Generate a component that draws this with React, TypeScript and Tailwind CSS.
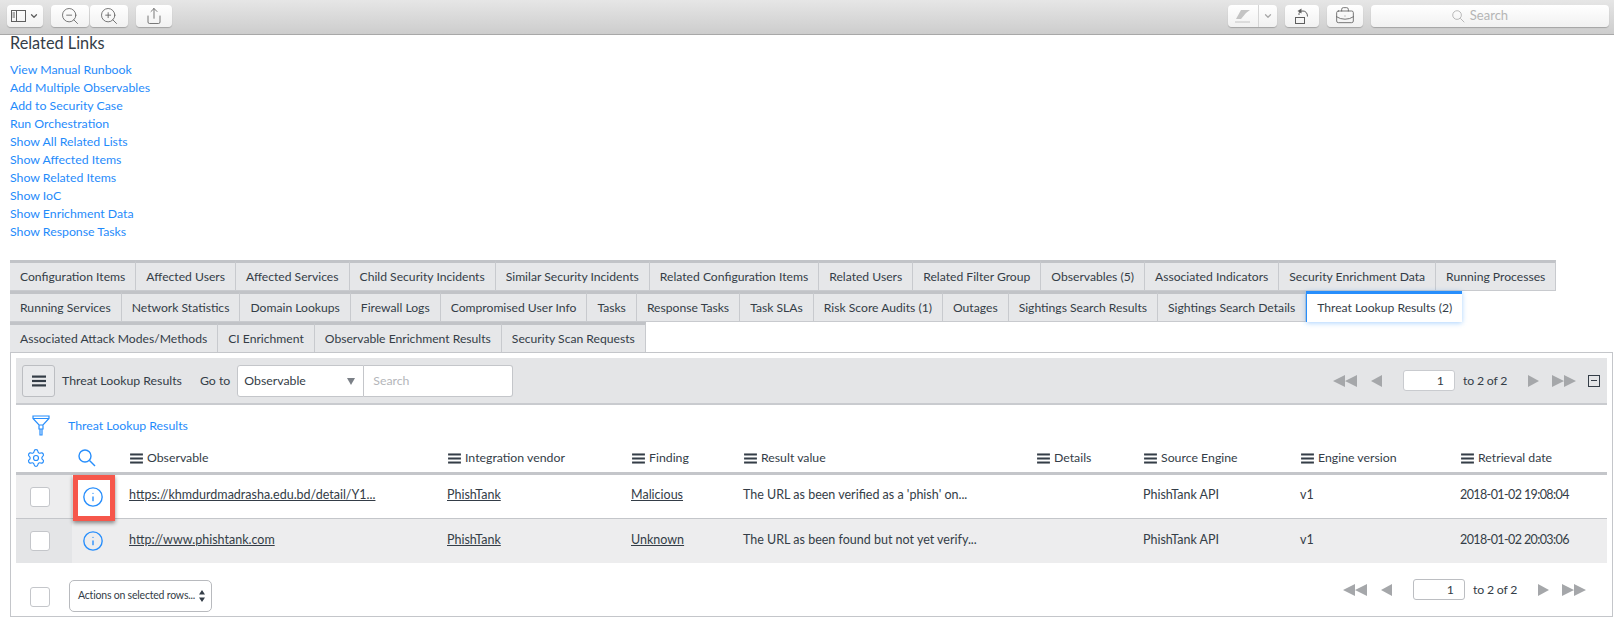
import { Info, Settings, Share, ZoomIn, ZoomOut, ChevronDown, BriefcaseBusiness } from 'lucide-react';

const links = [
  'View Manual Runbook',
  'Add Multiple Observables',
  'Add to Security Case',
  'Run Orchestration',
  'Show All Related Lists',
  'Show Affected Items',
  'Show Related Items',
  'Show IoC',
  'Show Enrichment Data',
  'Show Response Tasks',
];

const tabRows = [
  ['Configuration Items', 'Affected Users', 'Affected Services', 'Child Security Incidents', 'Similar Security Incidents', 'Related Configuration Items', 'Related Users', 'Related Filter Group', 'Observables (5)', 'Associated Indicators', 'Security Enrichment Data', 'Running Processes'],
  ['Running Services', 'Network Statistics', 'Domain Lookups', 'Firewall Logs', 'Compromised User Info', 'Tasks', 'Response Tasks', 'Task SLAs', 'Risk Score Audits (1)', 'Outages', 'Sightings Search Results', 'Sightings Search Details', 'Threat Lookup Results (2)'],
  ['Associated Attack Modes/Methods', 'CI Enrichment', 'Observable Enrichment Results', 'Security Scan Requests'],
];

const columns = ['Observable', 'Integration vendor', 'Finding', 'Result value', 'Details', 'Source Engine', 'Engine version', 'Retrieval date'];

const rows = [
  ['https://khmdurdmadrasha.edu.bd/detail/Y1...', 'PhishTank', 'Malicious', "The URL as been verified as a 'phish' on...", '', 'PhishTank API', 'v1', '2018-01-02 19:08:04'],
  ['http://www.phishtank.com', 'PhishTank', 'Unknown', 'The URL as been found but not yet verify...', '', 'PhishTank API', 'v1', '2018-01-02 20:03:06'],
];

const gridCols = 'grid grid-cols-[56px_46px_318px_184px_112px_293px_107px_157px_160px_157px]';

function Btn({ className, children }: { className: string; children?: React.ReactNode }) {
  return (
    <div className={`h-[22px] flex items-center justify-center rounded-[4px] bg-gradient-to-b from-white to-[#f1f1f1] shadow-[0_1px_1px_rgba(0,0,0,0.22)] text-[#5e5e5e] ${className}`}>
      {children}
    </div>
  );
}

function Bars({ className }: { className: string }) {
  return (
    <svg viewBox="0 0 14 12" className={className} fill="currentColor">
      <rect x="0" y="0.5" width="14" height="2.2" />
      <rect x="0" y="4.9" width="14" height="2.2" />
      <rect x="0" y="9.3" width="14" height="2.2" />
    </svg>
  );
}

function Magnifier({ className, strokeWidth }: { className: string; strokeWidth: number }) {
  return (
    <svg viewBox="0 0 18 18" className={className} fill="none" stroke="currentColor" strokeWidth={strokeWidth}>
      <circle cx="7" cy="7" r="6" />
      <path d="M11.5 11.500 17 17" />
    </svg>
  );
}

function Pager({ boxed }: { boxed?: boolean }) {
  const tri = 'fill-[#a5a7aa]';
  return (
    <div className="flex items-center text-[#343d47]">
      <svg viewBox="0 0 24 12" className="w-6 h-3 mr-[14px]">
        <path d="M0 6 12 0v12zM12 6 24 0v12z" className={tri} />
      </svg>
      <svg viewBox="0 0 11 12" className="w-[11px] h-3 mr-[21px]">
        <path d="M0 6 11 0v12z" className={tri} />
      </svg>
      <div className={`h-[21px] w-[52px] flex items-center justify-end pr-[10px] pt-px rounded-[3px] bg-white border ${boxed ? 'border-[#c9cbcf]' : 'border-[#bcbec2]'}`}>1</div>
      <span className="ml-[8px] w-[45px] pt-px whitespace-nowrap tracking-[-0.2px]">to 2 of 2</span>
      <svg viewBox="0 0 11 12" className="w-[11px] h-3 ml-[20px]">
        <path d="M11 6 0 0v12z" className={tri} />
      </svg>
      <svg viewBox="0 0 24 12" className="w-6 h-3 ml-[13px]">
        <path d="M12 6 0 0v12zM24 6 12 0v12z" className={tri} />
      </svg>
    </div>
  );
}

export default function App() {
  return (
    <div className="h-[617px] w-[1614px] overflow-hidden bg-white text-[#343d47] font-['Lato',sans-serif] text-[12.3px] flex flex-col">
      {/* toolbar */}
      <div className="h-[35px] shrink-0 flex items-start pt-[5px] pl-[7px] pr-[5px] bg-gradient-to-b from-[#e6e6e6] to-[#cdcdcd] border-b border-[#a8a8a8]">
        <Btn className="w-[36px] gap-[3px]">
          <svg viewBox="0 0 15 12" className="w-[15px] h-3" fill="none" stroke="currentColor">
            <rect x="0.5" y="0.5" width="14" height="11" />
            <path d="M5.5 0.5v11M1.5 3h2.5M1.5 5h2.5M1.5 7h2.5" />
          </svg>
          <ChevronDown className="w-[10px] h-[10px]" strokeWidth={3} />
        </Btn>
        <Btn className="w-[38px] ml-[8px]"><ZoomOut className="w-[20px] h-[20px]" strokeWidth={1} /></Btn>
        <Btn className="w-[38px] ml-px"><ZoomIn className="w-[20px] h-[20px]" strokeWidth={1} /></Btn>
        <Btn className="w-[36px] ml-[8px]"><Share className="w-[18px] h-[18px]" strokeWidth={1.1} /></Btn>
        <div className="flex-1" />
        <Btn className="w-[49px]">
          <div className="w-[31px] h-full flex items-center justify-center border-r border-[#d5d5d5]">
            <svg viewBox="0 0 16 14" className="w-4 h-[14px]">
              <path d="M6 1h9l-4 3-5 6H1z" fill="#c4c4c4" />
              <path d="M0 13h15" stroke="#c4c4c4" />
            </svg>
          </div>
          <div className="flex-1 flex items-center justify-center text-[#a8a8a8]"><ChevronDown className="w-[10px] h-[10px]" strokeWidth={3} /></div>
        </Btn>
        <Btn className="w-[34px] ml-[8px]">
          <svg viewBox="0 0 16 16" className="w-4 h-4" fill="none" stroke="currentColor">
            <rect x="1.5" y="9.500" width="9" height="6" />
            <path d="M5 7V5.500C5 4 7 3 9 3c2.500 0 4.500 2 4.500 5.500" />
            <path d="M7.500 0.500 3.500 3l4 2.500z" fill="currentColor" stroke="none" />
          </svg>
        </Btn>
        <Btn className="w-[36px] ml-[8px]"><BriefcaseBusiness className="w-[20px] h-[20px]" strokeWidth={1} /></Btn>
        <Btn className="w-[238px] ml-[8px] gap-[5px] pr-[20px] text-[#b5b5b5] text-[13px]">
          <Magnifier className="w-[13px] h-[13px] text-[#a8a8a8]" strokeWidth={1.1} />
          <span>Search</span>
        </Btn>
      </div>

      {/* related links */}
      <div className="pl-[10px] shrink-0 -mt-px">
        <div className="h-[18px] leading-[18px] text-[16.3px] text-[#343d47]">Related Links</div>
        <div className="mt-[9px] flex flex-col">
          {links.map((l) => (
            <a key={l} className="h-[18px] leading-[18px] text-[#1f8bfb]">{l}</a>
          ))}
        </div>
      </div>

      {/* tabs */}
      <div className="mt-[19px] ml-[10px] shrink-0 relative text-[12.15px]">
        {tabRows.map((row, r) => (
          <div key={r} className="flex h-[31px]">
            {row.map((t) => {
              const active = t.startsWith('Threat');
              return (
                <div
                  key={t}
                  className={
                    active
                      ? 'relative z-10 px-[10px] pt-px flex items-center whitespace-nowrap bg-white border-t-[3px] border-l border-[#278efc] shadow-[0_1px_5px_rgba(39,142,252,0.4)]'
                      : 'px-[10px] pt-px flex items-center whitespace-nowrap bg-[#e6e7e9] border-t-[3px] border-t-[#c1c3c7] border-r border-r-[#c8cace] border-b border-b-[#c8cace]'
                  }
                >
                  {t}
                </div>
              );
            })}
          </div>
        ))}
      </div>

      {/* panel */}
      <div className="ml-[10px] mr-px -mt-px flex-1 border border-[#c4c6ca] px-[5px] pt-[5px] relative">
        <div className="h-[47px] flex items-center pl-[6px] pr-[7px] bg-[#e4e5e7] border-b-2 border-[#c9cbcf]">
          <div className="w-[33px] h-[32px] flex items-center justify-center rounded-[3px] border border-[#bcbec2] bg-[#e9eaec]">
            <Bars className="w-[14px] h-3 text-[#343d47]" />
          </div>
          <span className="ml-[7px] pt-px whitespace-nowrap">Threat Lookup Results</span>
          <span className="ml-[18px] pt-px whitespace-nowrap">Go to</span>
          <div className="ml-[7px] w-[127px] h-[32px] pt-px flex items-center justify-between pl-[6px] pr-[8px] bg-white border border-[#c4c6ca] rounded-l-[3px]">
            <span>Observable</span>
            <svg viewBox="0 0 8 7" className="w-2 h-[7px]"><path d="M0 0h8L4 7z" fill="#7b8087" /></svg>
          </div>
          <div className="w-[149px] h-[32px] pt-px flex items-center pl-[9px] text-[#b4b6ba] bg-white border border-l-0 border-[#c4c6ca] rounded-r-[3px]">Search</div>
          <div className="flex-1" />
          <Pager boxed />
          <div className="ml-[12px] w-[12px] h-[12px] border border-[#343d47] flex items-center justify-center">
            <div className="w-[6px] h-px bg-[#343d47]" />
          </div>
        </div>

        <div className="h-[41px] flex items-center pl-[16px]">
          <svg viewBox="0 0 18 22" className="w-[18px] h-[22px] text-[#278efc]" fill="none" stroke="currentColor" strokeWidth="1.2">
            <path d="M1 1h16v2.500l-6 6.500H7L1 3.500zM1 3.500h16M7 10h4v4H7zM8 14h2v6H8z" />
          </svg>
          <span className="ml-[18px] pt-px text-[#1f8bfb]">Threat Lookup Results</span>
        </div>

        {/* table */}
        <div className={`${gridCols} h-[29px] pb-[2px] items-center border-b-[3px] border-[#c4c6ca]`}>
          <div className="pl-[10px]"><Settings className="w-[20px] h-[20px] text-[#278efc]" strokeWidth={1.4} /></div>
          <div className="pl-[6px]"><Magnifier className="w-[18px] h-[18px] text-[#278efc]" strokeWidth={1.4} /></div>
          {columns.map((c) => (
            <div key={c} className="pl-[12px] flex items-center gap-[4px] whitespace-nowrap">
              <Bars className="w-[13px] h-[11px] text-[#343d47]" />
              {c}
            </div>
          ))}
        </div>
        {rows.map((row, i) => (
          <div key={i} className={`${gridCols} h-[44px] items-center text-[12.5px] ${i === 0 ? 'bg-white border-b border-[#c4c6ca]' : 'bg-[#ededee]'}`}>
            <div className={`h-full flex items-center pl-[14px] ${i === 0 ? 'bg-[#ededee]' : 'bg-[#e4e5e7]'}`}>
              <div className="w-[20px] h-[20px] bg-white rounded-[3px] border border-[#c4c6ca]" />
            </div>
            <div className="relative h-full flex items-center pl-[10px]">
              <Info className="w-[22px] h-[22px] text-[#278efc]" strokeWidth={1.5} />
              {i === 0 && (
                <div className="absolute left-px top-0 w-[42px] h-[46px] border-[5px] border-[#f6574b] shadow-[0_2px_4px_rgba(0,0,0,0.45)]" />
              )}
            </div>
            {row.map((v, j) => (
              <div key={j} className={`pl-[11px] pb-[2px] whitespace-nowrap ${j < 3 ? 'underline' : ''} ${j === 7 ? 'tracking-[-0.6px]' : ''}`}>{v}</div>
            ))}
          </div>
        ))}

        {/* bottom bar */}
        <div className="flex items-start pt-[17px] pl-[14px] pr-[21px]">
          <div className="mt-[7px] w-[20px] h-[20px] bg-white rounded-[3px] border border-[#c4c6ca]" />
          <div className="ml-[19px] w-[143px] h-[32px] flex items-center justify-between pl-[8px] pr-[6px] rounded-[5px] border border-[#b8babe] text-[10.5px] tracking-[-0.2px]">
            <span className="whitespace-nowrap">Actions on selected rows...</span>
            <svg viewBox="0 0 6 12" className="w-[6px] h-3 shrink-0"><path d="M3 0l3 4.500H0zM3 12l3-4.500H0z" fill="#343d47" /></svg>
          </div>
          <div className="flex-1" />
          <div className="mt-[-1px]"><Pager /></div>
        </div>
      </div>
    </div>
  );
}
